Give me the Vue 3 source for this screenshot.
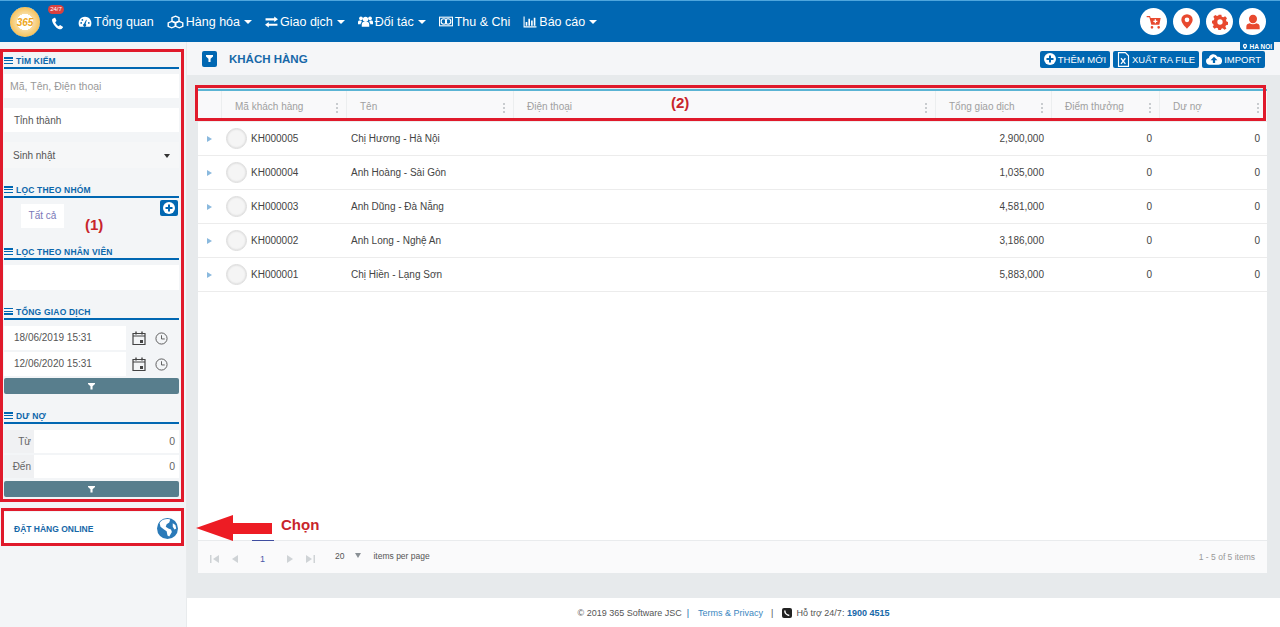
<script setup>
const navItems = [
  { label: 'Tổng quan', icon: 'gauge' },
  { label: 'Hàng hóa', icon: 'cubes', caret: true },
  { label: 'Giao dịch', icon: 'swap', caret: true },
  { label: 'Đối tác', icon: 'users', caret: true },
  { label: 'Thu & Chi', icon: 'money' },
  { label: 'Báo cáo', icon: 'chart', caret: true },
]

const columns = [
  { label: 'Mã khách hàng', width: '125px' },
  { label: 'Tên', width: '167px' },
  { label: 'Điện thoại', width: '422px' },
  { label: 'Tổng giao dịch', width: '116px' },
  { label: 'Điểm thưởng', width: '108px' },
  { label: 'Dư nợ', width: '108px' },
]

const customers = [
  { code: 'KH000005', name: 'Chị Hương - Hà Nội', total: '2,900,000' },
  { code: 'KH000004', name: 'Anh Hoàng - Sài Gòn', total: '1,035,000' },
  { code: 'KH000003', name: 'Anh Dũng - Đà Nẵng', total: '4,581,000' },
  { code: 'KH000002', name: 'Anh Long - Nghệ An', total: '3,186,000' },
  { code: 'KH000001', name: 'Chị Hiền - Lạng Sơn', total: '5,883,000' },
]
</script>

<template>
  <div class="page">
    <header class="topbar">
      <div class="logo"><span>365</span></div>
      <div class="hotline">
        <svg width="13" height="13" viewBox="0 0 24 24"><path fill="#fff" d="M6.6 1.5 3 3C1.5 4 1.6 7 3.5 11c2.2 4.700 5.600 8.300 9.500 10.500 2.500 1.300 5 1.500 6.500.5l2.500-2.500c.4-.5.300-1-.2-1.400l-4.300-3c-.5-.3-1-.2-1.400.2l-1.600 1.700c-2.800-1.300-5.400-4.200-6.800-7.500l1.900-1.500c.5-.4.500-.9.300-1.400L7.900 2c-.3-.5-.8-.7-1.300-.5z"/></svg>
        <span class="badge">24/7</span>
      </div>
      <nav class="nav">
        <a v-for="item in navItems" :key="item.label" class="nav-item">
          <svg v-if="item.icon === 'gauge'" width="14" height="14" viewBox="0 0 24 24"><path fill="#fff" d="M12 3a11 11 0 0 0-9.500 16.500c.3.500.8.500 1.200.5h16.600c.4 0 .9 0 1.200-.5A11 11 0 0 0 12 3zm1 12.300a2.500 2.500 0 1 1-2.600-.3L14 8l1 .4-2 6.900zM5.500 15a1.500 1.500 0 1 1 0-3 1.500 1.500 0 0 1 0 3zm2-5a1.500 1.500 0 1 1 0-3 1.500 1.500 0 0 1 0 3zm11 5a1.500 1.500 0 1 1 0-3 1.500 1.500 0 0 1 0 3z"/></svg>
          <svg v-else-if="item.icon === 'cubes'" width="17" height="14" viewBox="0 0 28 24"><g fill="none" stroke="#fff" stroke-width="2.400"><path d="M14 2l6 2.500v6L14 13l-6-2.500v-6z"/><path d="M7.500 11l6 2.500v6L7.500 22l-6-2.500v-6z"/><path d="M20.500 11l6 2.500v6L20.500 22l-6-2.500v-6z"/></g></svg>
          <svg v-else-if="item.icon === 'swap'" width="13" height="12" viewBox="0 0 24 22"><path fill="#fff" d="M17 1l7 5-7 5V8H1V4h16zM7 11v3h16v4H7v3l-7-5z"/></svg>
          <svg v-else-if="item.icon === 'users'" width="15" height="13" viewBox="0 0 28 24"><g fill="#fff"><circle cx="14" cy="8" r="5"/><circle cx="5.500" cy="6" r="3.500"/><circle cx="22.500" cy="6" r="3.500"/><path d="M7 22v-5c0-3 2-4 4-4h6c2 0 4 1 4 4v5zM0 17v-4c0-2 1-3 3-3h3c.3 1.300 1 2.300 1.500 3-1.500.7-2.500 2-2.500 4zM28 17v-4c0-2-1-3-3-3h-3c-.3 1.300-1 2.300-1.500 3 1.500.7 2.500 2 2.500 4z"/></g></svg>
          <svg v-else-if="item.icon === 'money'" width="14" height="11" viewBox="0 0 26 20"><rect x="1" y="2" width="24" height="16" fill="none" stroke="#fff" stroke-width="2"/><circle cx="9" cy="10" r="5" fill="none" stroke="#fff" stroke-width="2"/><circle cx="17" cy="10" r="5" fill="none" stroke="#fff" stroke-width="2"/></svg>
          <svg v-else width="14" height="12" viewBox="0 0 26 22"><path fill="#fff" d="M1 1h2v18h22v2H1zM5 11h3v7H5zM10 5h3v13h-3zM15 8h3v10h-3zM20 3h3v15h-3z"/></svg>
          <span>{{ item.label }}</span>
          <i v-if="item.caret" class="caret"></i>
        </a>
      </nav>
      <div class="top-actions">
        <span class="round">
          <svg width="16" height="16" viewBox="0 0 24 24"><path fill="#e8492f" d="M1 3h5l1 3h15l-2 10H8L5 5H1zM9 18a2 2 0 1 1 0 4 2 2 0 0 1 0-4zm10 0a2 2 0 1 1 0 4 2 2 0 0 1 0-4zM13 8v2h-2v2h2v2h2v-2h2v-2h-2V8z" fill-rule="evenodd"/></svg>
        </span>
        <span class="round">
          <svg width="16" height="17" viewBox="0 0 24 24"><path fill="#e8492f" fill-rule="evenodd" d="M12 1a8.500 8.500 0 0 0-8.500 8.500C3.500 15 12 23 12 23s8.500-8 8.500-13.500A8.500 8.500 0 0 0 12 1zm0 5a3.500 3.500 0 1 1 0 7 3.500 3.500 0 0 1 0-7z"/></svg>
        </span>
        <span class="round">
          <svg width="16" height="16" viewBox="0 0 24 24"><path fill="#e8492f" fill-rule="evenodd" d="M10 1h4l.7 3 2.300 1 2.700-1.600 2.800 2.800L20.900 9l1 2.300 2.100.7v4l-3 .7-1 2.300 1.600 2.700-2.800 1.800L16 21.200l-2 .8-.5 2h-4l-.7-2.500-2.300-1-2.700 1.500-2.800-2.800L2.600 17l-1-2.300L0 14v-4l2.600-.7 1-2.300L2 4.200 4.800 1.400 7.500 3l2-.8zM12 8a4 4 0 1 0 0 8 4 4 0 0 0 0-8z"/></svg>
        </span>
        <span class="round">
          <svg width="16" height="16" viewBox="0 0 24 24"><path fill="#e8492f" d="M12 1a6 6 0 0 1 6 6.500c0 3.500-2.500 6.500-6 6.500s-6-3-6-6.500A6 6 0 0 1 12 1zM2 23v-4c0-3 2-4.500 5-5 1.300 1 3 1.500 5 1.500s3.700-.5 5-1.500c3 .5 5 2 5 5v4z"/></svg>
        </span>
      </div>
    </header>

    <div class="body">
      <aside class="sidebar">
        <section class="filter">
          <h4 class="filter-title"><span class="list-ico"></span>TÌM KIẾM</h4>
          <div class="field search">Mã, Tên, Điện thoại</div>
          <div class="field city">Tỉnh thành</div>
          <div class="field birthday">Sinh nhật <i class="down"></i></div>
        </section>

        <section class="filter group">
          <h4 class="filter-title"><span class="list-ico"></span>LỌC THEO NHÓM</h4>
          <button class="add-group">
            <svg width="12" height="12" viewBox="0 0 24 24"><circle cx="12" cy="12" r="12" fill="#fff"/><path fill="#0067b2" d="M10 5h4v5h5v4h-5v5h-4v-5H5v-4h5z"/></svg>
          </button>
          <div class="chip-row"><span class="chip">Tất cả</span></div>
        </section>

        <section class="filter staff">
          <h4 class="filter-title"><span class="list-ico"></span>LỌC THEO NHÂN VIÊN</h4>
          <div class="field staff-box"></div>
        </section>

        <section class="filter total">
          <h4 class="filter-title"><span class="list-ico"></span>TỔNG GIAO DỊCH</h4>
          <div v-for="d in ['18/06/2019 15:31', '12/06/2020 15:31']" :key="d" class="date-row">
            <span class="date-val">{{ d }}</span>
            <span class="date-ico">
              <svg width="14" height="14" viewBox="0 0 14 14"><path fill="none" stroke="#444" stroke-width="1.200" d="M1 2.500h12v11H1zM1 5h12"/><path stroke="#444" stroke-width="1.400" d="M4 .5v3M10 .5v3"/><rect x="8" y="9" width="3" height="3" fill="#444"/></svg>
            </span>
            <span class="time-ico">
              <svg width="13" height="13" viewBox="0 0 14 14"><circle cx="7" cy="7" r="6" fill="none" stroke="#555" stroke-width="1"/><path fill="none" stroke="#555" d="M7 3.500V7.500h3.500"/></svg>
            </span>
          </div>
          <button class="apply"><i class="funnel"></i></button>
        </section>

        <section class="filter debt">
          <h4 class="filter-title"><span class="list-ico"></span>DƯ NỢ</h4>
          <div class="range-row"><span class="range-label">Từ</span><span class="range-val">0</span></div>
          <div class="range-row"><span class="range-label">Đến</span><span class="range-val">0</span></div>
          <button class="apply"><i class="funnel"></i></button>
        </section>

        <div class="order-online">
          <span>ĐẶT HÀNG ONLINE</span>
          <svg width="21" height="21" viewBox="0 0 24 24"><circle cx="12" cy="12" r="12" fill="#2a7ab8"/><path fill="#fff" d="M7 2c3-1 7-1 8 0l-1 3-3 2-1 3 3 2 3 1 1 3-3 5-2-1-1-5-3-2-4-3-1-4c1-2 2-3 4-4zM18 6l3 2 1 4-2 1-2-3z"/></svg>
        </div>
      </aside>

      <main class="main">
        <div class="title-bar">
          <span class="title-btn"><i class="funnel small"></i></span>
          <h2>KHÁCH HÀNG</h2>
          <div class="title-actions">
            <span class="branch">
              <svg width="6" height="7" viewBox="0 0 24 24"><path fill="#fff" fill-rule="evenodd" d="M12 1a8.500 8.500 0 0 0-8.500 8.500C3.500 15 12 23 12 23s8.500-8 8.500-13.500A8.500 8.500 0 0 0 12 1zm0 5a3.500 3.500 0 1 1 0 7 3.500 3.500 0 0 1 0-7z"/></svg>HA NOI
            </span>
            <button class="act">
              <svg width="12" height="12" viewBox="0 0 24 24"><circle cx="12" cy="12" r="12" fill="#fff"/><path fill="#0067b2" d="M10 5h4v5h5v4h-5v5h-4v-5H5v-4h5z"/></svg>THÊM MỚI
            </button>
            <button class="act">
              <svg width="13" height="15" viewBox="0 0 20 24"><path fill="none" stroke="#fff" stroke-width="1.800" d="M2 1h11l5 5v17H2z"/><path fill="none" stroke="#fff" stroke-width="2" d="M6 10l7 9M13 10l-7 9"/></svg>XUẤT RA FILE
            </button>
            <button class="act">
              <svg width="16" height="12" viewBox="0 0 28 20"><path fill="#fff" fill-rule="evenodd" d="M6 20a6 6 0 0 1-1-11.900A8 8 0 0 1 20 6a7 7 0 0 1 2 14zM14 6l-6 6h4v5h4v-5h4z"/></svg>IMPORT
            </button>
          </div>
        </div>

        <div class="content">
          <div class="card">
            <div class="thead">
              <div class="cell-expand"></div>
              <div v-for="col in columns" :key="col.label" class="th" :style="{ width: col.width }">
                <span>{{ col.label }}</span>
                <i class="dots"></i>
              </div>
            </div>
            <div class="tbody">
              <div v-for="c in customers" :key="c.code" class="tr">
                <div class="cell-expand"><i class="arrow"></i></div>
                <div class="td code" :style="{ width: columns[0].width }"><span class="avatar"></span>{{ c.code }}</div>
                <div class="td" :style="{ width: columns[1].width }">{{ c.name }}</div>
                <div class="td" :style="{ width: columns[2].width }"></div>
                <div class="td num" :style="{ width: columns[3].width }">{{ c.total }}</div>
                <div class="td num" :style="{ width: columns[4].width }">0</div>
                <div class="td num" :style="{ width: columns[5].width }">0</div>
              </div>
            </div>
            <div class="pager">
              <div class="pages">
                <svg width="9" height="8" viewBox="0 0 9 8"><path fill="#cfd3d6" d="M0 0h1.500v8H0zM9 0v8L3 4z"/></svg>
                <svg width="6" height="8" viewBox="0 0 6 8"><path fill="#cfd3d6" d="M6 0v8L0 4z"/></svg>
                <span class="page-num">1</span>
                <svg width="6" height="8" viewBox="0 0 6 8"><path fill="#cfd3d6" d="M0 0v8l6-4z"/></svg>
                <svg width="9" height="8" viewBox="0 0 9 8"><path fill="#cfd3d6" d="M9 0H7.500v8H9zM0 0v8l6-4z"/></svg>
              </div>
              <span class="per-num">20</span>
              <i class="per-caret"></i>
              <span class="per-label">items per page</span>
              <span class="range-info">1 - 5 of 5 items</span>
            </div>
          </div>
        </div>

        <footer class="footer">
          <span>© 2019 365 Software JSC</span>
          <span class="sep blue">|</span>
          <a class="link">Terms &amp; Privacy</a>
          <span class="sep">|</span>
          <svg width="10" height="10" viewBox="0 0 10 10"><rect width="10" height="10" rx="2" fill="#222"/><path fill="none" stroke="#fff" stroke-width="1.500" d="M2.800 2.500c0 2.500 2 4.700 4.500 5"/></svg>
          <span class="support">Hỗ trợ 24/7: <b>1900 4515</b></span>
        </footer>
      </main>
    </div>

    <!-- annotation marks drawn over the screenshot -->
    <div class="mark mark-filter"></div>
    <div class="mark mark-order"></div>
    <div class="mark mark-head"></div>
    <span class="note note-1">(1)</span>
    <span class="note note-2">(2)</span>
    <svg class="note-arrow" width="76" height="26" viewBox="0 0 76 26"><path fill="#ed1c24" d="M0 13 37 0v8h39v11H37v7z"/></svg>
    <span class="note note-pick">Chọn</span>
  </div>
</template>

<style>
html, body {
  margin: 0;
  height: 100%;
  overflow: hidden;
}
</style>

<style scoped>
* {
  box-sizing: border-box;
}

.page {
  position: relative;
  width: 1280px;
  height: 627px;
  overflow: hidden;
  display: flex;
  flex-direction: column;
  font-family: "Liberation Sans", Arial, sans-serif;
  font-size: 10px;
  color: #444;
  background: #e7eaec;
}

.topbar {
  height: 42px;
  flex: none;
  display: flex;
  align-items: center;
  background: #0067b2;
  border-top: 1px solid #4ea6dd;
  color: #fff;
}

.logo {
  width: 30px;
  height: 30px;
  margin-left: 10px;
  margin-top: 1px;
  border-radius: 50%;
  background: radial-gradient(circle, #fff 38%, #f8dca0 39%, #f6c25c 70%, #fff 71%);
  display: flex;
  align-items: center;
  justify-content: center;
}

.logo span {
  font-size: 10px;
  font-weight: 700;
  font-style: italic;
  color: #eda620;
  background: #fff;
  border-radius: 50%;
  padding: 1px 0;
}

.hotline {
  position: relative;
  width: 13px;
  height: 13px;
  margin-left: 11px;
  margin-top: 3px;
}

.hotline svg {
  display: block;
}

.badge {
  position: absolute;
  left: -3px;
  top: -12px;
  width: 16px;
  height: 9px;
  border-radius: 5px;
  background: #d9403f;
  color: #fff;
  font-size: 6px;
  line-height: 9px;
  text-align: center;
}

.nav {
  display: flex;
  align-items: center;
  margin-left: 14px;
  gap: 13px;
}

.nav-item {
  display: flex;
  align-items: center;
  gap: 2px;
  font-size: 12.500px;
  color: #fff;
}

.caret {
  width: 0;
  height: 0;
  margin-left: 2px;
  border-left: 4px solid transparent;
  border-right: 4px solid transparent;
  border-top: 4px solid #fff;
}

.top-actions {
  margin-left: auto;
  margin-right: 14px;
  display: flex;
  gap: 6px;
}

.round {
  width: 27px;
  height: 27px;
  border-radius: 50%;
  background: #fff;
  display: flex;
  align-items: center;
  justify-content: center;
}

.body {
  flex: 1;
  display: flex;
  min-height: 0;
}

.sidebar {
  width: 187px;
  flex: none;
  padding: 10px 7px 0 4px;
  background: #f3f5f7;
  border-right: 1px solid #e8ebed;
}

.filter-title {
  margin: 0;
  height: 17px;
  display: flex;
  align-items: center;
  gap: 3px;
  padding-top: 2px;
  border-bottom: 2px solid #0067b2;
  font-size: 8.500px;
  font-weight: 700;
  color: #0c67ab;
  letter-spacing: 0.2px;
  white-space: nowrap;
}

.list-ico {
  width: 9px;
  height: 7px;
  background: repeating-linear-gradient(#0067b2 0 1.500px, transparent 1.500px 2.750px);
}

.field {
  display: flex;
  align-items: center;
  background: #fff;
  font-size: 10px;
  color: #555;
  padding-left: 6px;
}

.search {
  height: 24px;
  margin-top: 5px;
  color: #999;
  font-size: 10.500px;
}

.city {
  height: 24px;
  margin-top: 10px;
  padding-left: 10px;
}

.birthday {
  position: relative;
  height: 26px;
  margin-top: 10px;
  padding-left: 9px;
  background: #f6f7f8;
}

.down {
  position: absolute;
  right: 9px;
  top: 12px;
  border-left: 3.500px solid transparent;
  border-right: 3.500px solid transparent;
  border-top: 4px solid #333;
}

.group {
  position: relative;
  margin-top: 13px;
}

.add-group {
  position: absolute;
  right: 1px;
  top: 19px;
  width: 18px;
  height: 16px;
  padding: 0;
  border: none;
  border-radius: 2px;
  background: #0067b2;
  display: flex;
  align-items: center;
  justify-content: center;
}

.chip-row {
  padding: 6px 0 0 17px;
  height: 45px;
}

.chip {
  display: inline-block;
  width: 43px;
  height: 24px;
  background: #fff;
  color: #7a78b8;
  font-size: 10px;
  line-height: 24px;
  text-align: center;
}

.staff-box {
  height: 25px;
  margin-top: 5px;
}

.total {
  margin-top: 13px;
}

.date-row {
  display: flex;
  align-items: center;
  height: 24px;
  margin-top: 2px;
}

.total .filter-title + .date-row {
  margin-top: 6px;
}

.date-val {
  width: 122px;
  height: 24px;
  padding-left: 10px;
  line-height: 24px;
  background: #fff;
  font-size: 10px;
  color: #555;
}

.date-ico {
  width: 26px;
  padding-left: 6px;
  display: flex;
}

.time-ico {
  display: flex;
  padding-left: 3px;
}

.apply {
  display: flex;
  align-items: center;
  justify-content: center;
  width: 100%;
  height: 16px;
  margin-top: 2px;
  padding: 0;
  border: none;
  border-radius: 2px;
  background: #587e8d;
}

.funnel {
  display: block;
  width: 7px;
  height: 7px;
  background: #fff;
  clip-path: polygon(0 0, 100% 0, 100% 20%, 65% 55%, 65% 100%, 35% 100%, 35% 55%, 0 20%);
}

.debt {
  margin-top: 13px;
}

.range-row {
  display: flex;
  height: 23px;
  margin-top: 2px;
  align-items: stretch;
}

.debt .filter-title + .range-row {
  margin-top: 6px;
}

.range-label {
  width: 30px;
  padding-right: 3px;
  line-height: 23px;
  text-align: right;
  font-size: 10px;
  color: #666;
  background: #f0f1f3;
}

.range-val {
  flex: 1;
  padding-right: 4px;
  line-height: 23px;
  text-align: right;
  font-size: 10.500px;
  color: #666;
  background: #fff;
}

.debt .apply {
  margin-top: 3px;
}

.order-online {
  display: flex;
  align-items: center;
  justify-content: space-between;
  height: 33px;
  margin: 15px -3px 0 0;
  padding: 0 4px 0 10px;
  background: #fff;
  font-size: 8.500px;
  font-weight: 700;
  color: #1768a8;
}

.main {
  flex: 1;
  min-width: 0;
  display: flex;
  flex-direction: column;
}

.title-bar {
  position: relative;
  height: 33px;
  flex: none;
  display: flex;
  align-items: center;
  padding-left: 15px;
  background: #f5f6f8;
}

.title-btn {
  width: 15px;
  height: 16px;
  border-radius: 2px;
  background: #0067b2;
  display: flex;
  align-items: center;
  justify-content: center;
}

.title-bar h2 {
  margin: 0 0 0 12px;
  font-size: 11.500px;
  font-weight: 700;
  color: #1768a8;
}

.title-actions {
  margin-left: auto;
  margin-right: 15px;
  display: flex;
  gap: 3px;
  margin-top: 1px;
}

.branch {
  position: absolute;
  top: 0;
  right: 6px;
  height: 8px;
  padding: 0 2px;
  display: flex;
  align-items: center;
  gap: 1px;
  background: #0067b2;
  color: #fff;
  font-size: 6.500px;
  font-weight: 700;
}

.act {
  height: 17px;
  padding: 0 4px;
  border: none;
  border-radius: 2px;
  display: flex;
  align-items: center;
  gap: 2px;
  background: #0067b2;
  color: #fff;
  font-family: inherit;
  font-size: 9.500px;
}

.content {
  flex: 1;
  min-height: 0;
  padding: 14px 13px 25px 11px;
}

.card {
  height: 100%;
  display: flex;
  flex-direction: column;
  background: #fff;
  border-top: 2px solid #5bb4d4;
  margin-top: 0;
}

.thead {
  display: flex;
  height: 31px;
  background: #f9f9fa;
  border-bottom: 1px solid #eee;
}

.cell-expand {
  width: 23px;
  flex: none;
  display: flex;
  align-items: center;
  justify-content: center;
}

.th {
  flex: none;
  position: relative;
  display: flex;
  align-items: center;
  padding-left: 13px;
  border-left: 1px solid #eceeef;
  font-size: 10px;
  color: #a0a0a0;
}

.dots {
  position: absolute;
  right: 8px;
  top: 12px;
  width: 2px;
  height: 10px;
  background: repeating-linear-gradient(#c9cccf 0 2px, transparent 2px 4px);
}

.tbody {
  flex: 1;
}

.tr {
  display: flex;
  height: 34px;
  border-bottom: 1px solid #ececec;
}

.arrow {
  display: block;
  border-top: 3px solid transparent;
  border-bottom: 3px solid transparent;
  border-left: 5px solid #8ab9de;
}

.td {
  flex: none;
  display: flex;
  align-items: center;
  padding-left: 5px;
  font-size: 10px;
  color: #444;
  white-space: nowrap;
}

.code {
  padding-left: 5px;
}

.avatar {
  width: 21px;
  height: 21px;
  margin-right: 4px;
  border-radius: 50%;
  background: #f5f5f5;
  border: 1px solid #ddd;
  box-shadow: inset 0 0 2px #ccc;
}

.num {
  justify-content: flex-end;
  padding-right: 7px;
  padding-left: 0;
}

.pager {
  position: relative;
  height: 33px;
  display: flex;
  align-items: center;
  padding-left: 12px;
  background: #fafafb;
  border-top: 1px solid #e9ebed;
  flex: none;
  font-size: 8.500px;
  color: #555;
}

.pages {
  display: flex;
  align-items: center;
  gap: 0;
  width: 125px;
  justify-content: space-between;
  padding-right: 20px;
  padding-top: 3px;
}

.page-num {
  position: relative;
  width: 22px;
  text-align: center;
  color: #4a58a8;
  font-size: 9px;
}

.page-num::before {
  content: "";
  position: absolute;
  top: -14px;
  left: 0;
  width: 100%;
  height: 1px;
  background: #3f4da0;
}

.per-num {
  margin-top: -3px;
  margin-left: 0;
}

.per-caret {
  margin: -3px 12px 0 11px;
  border-left: 3.500px solid transparent;
  border-right: 3.500px solid transparent;
  border-top: 5px solid #8a9095;
}

.per-label {
  margin-top: -3px;
}

.range-info {
  margin-left: auto;
  margin-right: 12px;
  font-size: 8.500px;
  color: #999;
}

.footer {
  height: 29px;
  flex: none;
  display: flex;
  align-items: center;
  justify-content: center;
  gap: 4px;
  background: #fff;
  font-size: 9px;
  color: #555;
  padding-left: 0;
}

.sep {
  margin: 0 5px 0 1px;
}

.sep.blue {
  color: #1768a8;
  margin: 0 5px 0 1px;
}

.link {
  color: #3a87bf;
  margin-right: 3px;
}

.support b {
  color: #1768a8;
}

.mark {
  position: absolute;
  border: 3px solid #e01a2b;
}

.mark-filter {
  left: 0;
  top: 49px;
  width: 184px;
  height: 453px;
}

.mark-order {
  left: 1px;
  top: 508px;
  width: 183px;
  height: 38px;
}

.mark-head {
  left: 195px;
  top: 85px;
  width: 1071px;
  height: 36px;
}

.note {
  position: absolute;
  font-weight: 700;
  font-size: 15px;
  color: #c8242b;
}

.note-1 {
  left: 85px;
  top: 216px;
}

.note-2 {
  left: 671px;
  top: 94px;
}

.note-pick {
  left: 281px;
  top: 516px;
}

.note-arrow {
  position: absolute;
  left: 196px;
  top: 515px;
}
</style>
